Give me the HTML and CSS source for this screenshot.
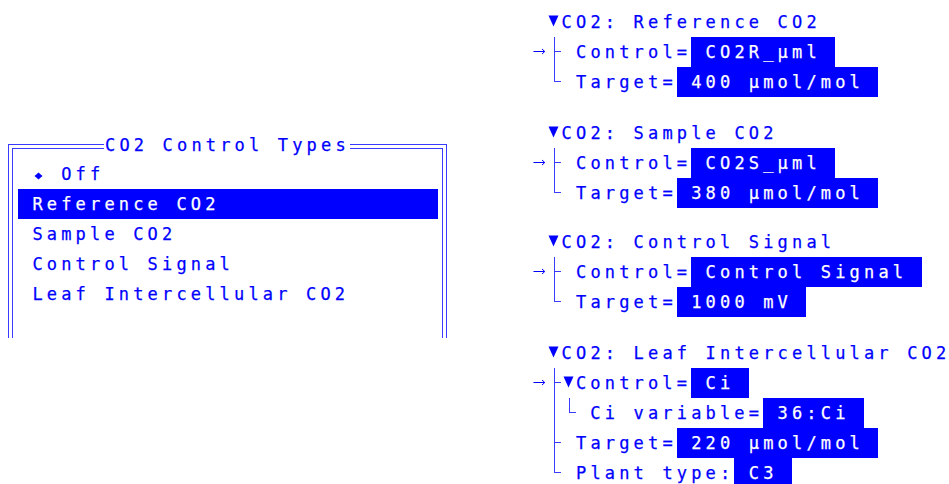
FILE: index.html
```html
<!DOCTYPE html>
<html lang="en">
<head>
<meta charset="utf-8">
<title>CO2 Control Types</title>
<link rel="stylesheet" href="styles.css">
</head>
<body>
<div class="page">
  <section class="menu">
    <div class="menu-title">CO2 Control Types</div>
    <div class="menu-inner">
      <div class="item"><span class="cell"><svg class="ico" width="14" height="30" viewBox="0 0 14 30"><polygon points="2.5,17 6.5,13.5 10.5,17 6.5,20.5"/></svg></span><span class="txt"> Off</span></div>
      <div class="item sel"><span class="txt">Reference CO2</span></div>
      <div class="item"><span class="txt">Sample CO2</span></div>
      <div class="item"><span class="txt">Control Signal</span></div>
      <div class="item"><span class="txt">Leaf Intercellular CO2</span></div>
    </div>
  </section>

  <section class="tree">
    <div class="sec">
      <div class="row"><span class="cell"></span><span class="cell"><svg class="ico" width="14" height="30" viewBox="0 0 14 30"><polygon points="1.5,8.5 11.5,8.5 6.5,19.5"/></svg></span><span class="txt">CO2: Reference CO2</span></div>
      <div class="row"><span class="cell"><svg class="arr" width="14" height="30" viewBox="0 0 14 30"><path d="M0.5 14.5H11.5M9 12l2.8 2.5L9 17"/></svg></span><span class="cell tee"></span><span class="txt"> Control=</span><span class="val"> CO2R_µml </span></div>
      <div class="row"><span class="cell"></span><span class="cell elbow"></span><span class="txt"> Target=</span><span class="val"> 400 µmol/mol </span></div>
    </div>

    <div class="sec sec-b">
      <div class="row"><span class="cell"></span><span class="cell"><svg class="ico" width="14" height="30" viewBox="0 0 14 30"><polygon points="1.5,8.5 11.5,8.5 6.5,19.5"/></svg></span><span class="txt">CO2: Sample CO2</span></div>
      <div class="row"><span class="cell"><svg class="arr" width="14" height="30" viewBox="0 0 14 30"><path d="M0.5 14.5H11.5M9 12l2.8 2.5L9 17"/></svg></span><span class="cell tee"></span><span class="txt"> Control=</span><span class="val"> CO2S_µml </span></div>
      <div class="row"><span class="cell"></span><span class="cell elbow"></span><span class="txt"> Target=</span><span class="val"> 380 µmol/mol </span></div>
    </div>

    <div class="sec sec-c">
      <div class="row"><span class="cell"></span><span class="cell"><svg class="ico" width="14" height="30" viewBox="0 0 14 30"><polygon points="1.5,8.5 11.5,8.5 6.5,19.5"/></svg></span><span class="txt">CO2: Control Signal</span></div>
      <div class="row"><span class="cell"><svg class="arr" width="14" height="30" viewBox="0 0 14 30"><path d="M0.5 14.5H11.5M9 12l2.8 2.5L9 17"/></svg></span><span class="cell tee"></span><span class="txt"> Control=</span><span class="val"> Control Signal </span></div>
      <div class="row"><span class="cell"></span><span class="cell elbow"></span><span class="txt"> Target=</span><span class="val"> 1000 mV </span></div>
    </div>

    <div class="sec sec-b">
      <div class="row"><span class="cell"></span><span class="cell"><svg class="ico" width="14" height="30" viewBox="0 0 14 30"><polygon points="1.5,8.5 11.5,8.5 6.5,19.5"/></svg></span><span class="txt">CO2: Leaf Intercellular CO2</span></div>
      <div class="row"><span class="cell"><svg class="arr" width="14" height="30" viewBox="0 0 14 30"><path d="M0.5 14.5H11.5M9 12l2.8 2.5L9 17"/></svg></span><span class="cell tee"></span><span class="cell"><svg class="ico" width="14" height="30" viewBox="0 0 14 30"><polygon points="1.5,8.5 11.5,8.5 6.5,19.5"/></svg></span><span class="txt">Control=</span><span class="val"> Ci </span></div>
      <div class="row"><span class="cell"></span><span class="cell pipe"></span><span class="cell elbow"></span><span class="txt"> Ci variable=</span><span class="val"> 36:Ci </span></div>
      <div class="row"><span class="cell"></span><span class="cell tee"></span><span class="txt"> Target=</span><span class="val"> 220 µmol/mol </span></div>
      <div class="row"><span class="cell"></span><span class="cell elbow"></span><span class="txt"> Plant type:</span><span class="val"> C3 </span></div>
    </div>
  </section>
</div>
</body>
</html>
```

FILE: styles.css
```css
html, body {
  margin: 0;
  padding: 0;
  background: #ffffff;
  overflow: hidden;
}

body {
  width: 949px;
  height: 484px;
  font-family: "DejaVu Sans Mono", monospace;
  font-size: 17px;
  letter-spacing: 4.165px;
  color: #0000ff;
  -webkit-text-stroke: 0.25px currentColor;
}

.page {
  display: flex;
  align-items: flex-start;
}

/* ---------- left menu ---------- */
.menu {
  position: relative;
  flex: none;
  box-sizing: border-box;
  width: 439px;
  height: 194px;
  margin: 144px 0 0 8px;
  padding: 3px 3px 0;
  border: 1px solid #3b3bff;
  border-bottom: 0;
}

.menu-inner {
  box-sizing: border-box;
  height: 100%;
  padding: 10px 4px 0 5px;
  border: 1px solid #3b3bff;
  border-bottom: 0;
}

.menu-title {
  position: absolute;
  top: -15px;
  left: 95px;
  width: 245px;
  height: 30px;
  padding-left: 1px;
  line-height: 30px;
  white-space: pre;
  background: #ffffff;
}

.item {
  display: flex;
  height: 30px;
  line-height: 30px;
  padding-left: 14.4px;
}

.item.sel {
  background: #0000ff;
  color: #ffffff;
}

/* ---------- right tree ---------- */
.tree {
  flex: none;
  display: flex;
  flex-direction: column;
  margin: 7px 0 0 85.8px;
}

.sec-b {
  margin-top: 21px;
}

.sec-c {
  margin-top: 19px;
}

.row {
  display: flex;
  height: 30px;
  line-height: 30px;
}

.cell {
  position: relative;
  flex: none;
  width: 14.4px;
  height: 30px;
}

.txt,
.val {
  flex: none;
  white-space: pre;
}

.val {
  background: #0000ff;
  color: #ffffff;
}

.ico {
  display: block;
  fill: #0000ff;
}

.arr {
  display: block;
  fill: none;
  stroke: #0000ff;
  stroke-width: 1;
}

.tee::before,
.pipe::before,
.elbow::before {
  content: "";
  position: absolute;
  left: 7px;
  top: 0;
  width: 1px;
  height: 30px;
  background: #3b3bff;
}

.elbow::before {
  height: 15px;
}

.tee::after,
.elbow::after {
  content: "";
  position: absolute;
  left: 7px;
  top: 14px;
  width: 7px;
  height: 1px;
  background: #3b3bff;
}
```
